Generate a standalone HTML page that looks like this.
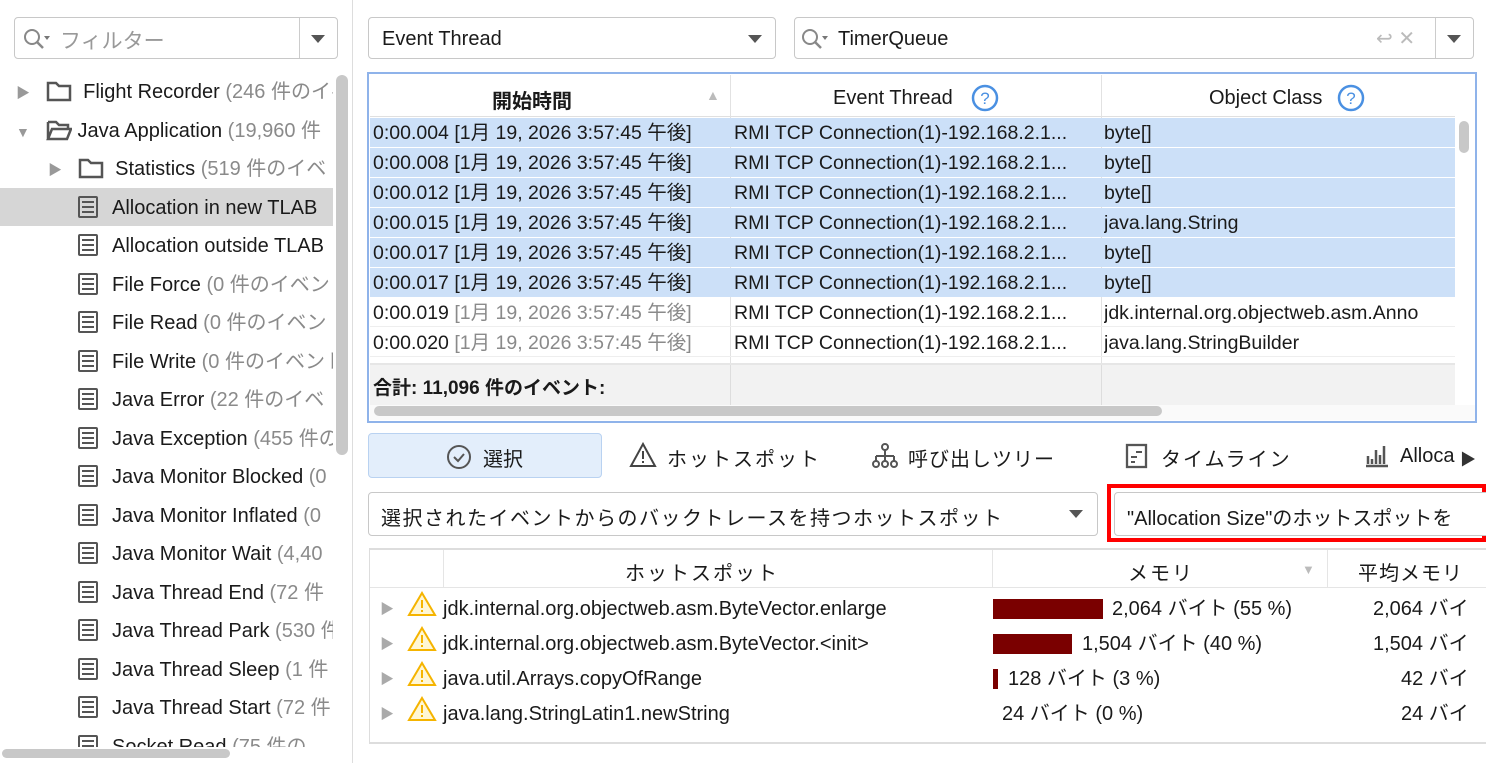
<!DOCTYPE html>
<html><head><meta charset="utf-8"><style>
*{box-sizing:border-box;margin:0;padding:0}
body{width:1486px;height:763px;overflow:hidden;background:#fff;font-family:"Segoe UI","Liberation Sans","Noto Sans CJK JP",sans-serif;font-size:20px;color:#1a1a1a;position:relative}
.a{position:absolute;white-space:nowrap;overflow:hidden}
.box{position:absolute;border:1.5px solid #c8c8c8;border-radius:4px;background:#fff}
.g{color:#8a8a8a}
.tri{position:absolute;width:0;height:0;border-left:7px solid transparent;border-right:7px solid transparent;border-top:8px solid #555}
.row{position:absolute;left:0;height:38px;line-height:40px;white-space:nowrap;overflow:hidden}
.doc{display:inline-block;width:20px;height:22px;border:2.5px solid #555;border-radius:2px;vertical-align:-4px;margin-right:14px;position:relative}
.doc:before{content:"";position:absolute;left:2px;right:2px;top:3px;height:2px;background:#555;box-shadow:0 5px 0 #555,0 10px 0 #555}
.trow{position:absolute;left:370px;width:1085px;height:29px;line-height:31px;white-space:nowrap;overflow:hidden;font-size:19.5px}
.trow span{position:absolute;top:0;overflow:hidden}
.sel{background:#cce0f8}
.hs{position:absolute;left:370px;width:1110px;height:35px;line-height:37px;white-space:nowrap}
.hs span{position:absolute;top:0}
.ar{color:#999;font-size:14px;display:inline-block;width:30px}
</style></head><body>
<!-- left panel -->
<div class="a" style="left:352px;top:0;width:1px;height:763px;background:#ddd"></div>
<div class="box" style="left:14px;top:17px;width:324px;height:42px"></div>
<div class="a" style="left:299px;top:18px;width:1px;height:40px;background:#ccc"></div>
<div class="tri" style="left:311px;top:35px"></div>
<svg class="a" style="left:22px;top:26px" width="34" height="26"><circle cx="10" cy="11" r="7" fill="none" stroke="#888" stroke-width="2"/><line x1="15" y1="16" x2="21" y2="22" stroke="#888" stroke-width="2.5"/><path d="M22 10l6 0-3 4z" fill="#777"/></svg>
<div class="a g" style="left:60px;top:25px;font-size:21px;color:#999">フィルター</div>

<div class="a" style="left:0;top:188px;width:333px;height:38px;background:#d6d6d6"></div>
<div class="row" style="top:72px;left:16px;width:317px"><span class="ar">▶</span><svg width="26" height="22" style="vertical-align:-4px"><path d="M2 3h8l3 3h11v14H2z" fill="none" stroke="#555" stroke-width="2.5"/></svg>&nbsp;&nbsp;Flight Recorder <span class="g">(246 件のイベント)</span></div>
<div class="row" style="top:111px;left:16px;width:317px"><span class="ar">▼</span><svg width="26" height="22" style="vertical-align:-4px"><path d="M2 3h8l3 3h9v4M2 20V3M2 20l4-10h19l-4 10z" fill="none" stroke="#555" stroke-width="2.5"/></svg>&nbsp;Java Application <span class="g">(19,960 件</span></div>
<div class="row" style="top:149px;left:48px;width:285px"><span class="ar">▶</span><svg width="26" height="22" style="vertical-align:-4px"><path d="M2 3h8l3 3h11v14H2z" fill="none" stroke="#555" stroke-width="2.5"/></svg>&nbsp;&nbsp;Statistics <span class="g">(519 件のイベ</span></div>
<div class="row" style="top:188px;left:78px;width:255px"><span class="doc"></span>Allocation in new TLAB</div>
<div class="row" style="top:226px;left:78px;width:255px"><span class="doc"></span>Allocation outside TLAB</div>
<div class="row" style="top:265px;left:78px;width:255px"><span class="doc"></span>File Force <span class="g">(0 件のイベント)</span></div>
<div class="row" style="top:303px;left:78px;width:255px"><span class="doc"></span>File Read <span class="g">(0 件のイベント)</span></div>
<div class="row" style="top:342px;left:78px;width:255px"><span class="doc"></span>File Write <span class="g">(0 件のイベント)</span></div>
<div class="row" style="top:380px;left:78px;width:255px"><span class="doc"></span>Java Error <span class="g">(22 件のイベ</span></div>
<div class="row" style="top:419px;left:78px;width:255px"><span class="doc"></span>Java Exception <span class="g">(455 件の</span></div>
<div class="row" style="top:457px;left:78px;width:255px"><span class="doc"></span>Java Monitor Blocked <span class="g">(0</span></div>
<div class="row" style="top:496px;left:78px;width:255px"><span class="doc"></span>Java Monitor Inflated <span class="g">(0</span></div>
<div class="row" style="top:534px;left:78px;width:255px"><span class="doc"></span>Java Monitor Wait <span class="g">(4,40</span></div>
<div class="row" style="top:573px;left:78px;width:255px"><span class="doc"></span>Java Thread End <span class="g">(72 件</span></div>
<div class="row" style="top:611px;left:78px;width:255px"><span class="doc"></span>Java Thread Park <span class="g">(530 件</span></div>
<div class="row" style="top:650px;left:78px;width:255px"><span class="doc"></span>Java Thread Sleep <span class="g">(1 件</span></div>
<div class="row" style="top:688px;left:78px;width:255px"><span class="doc"></span>Java Thread Start <span class="g">(72 件</span></div>
<div class="row" style="top:727px;left:78px;width:255px;height:20px"><span class="doc"></span>Socket Read <span class="g">(75 件の</span></div>
<div class="a" style="left:336px;top:75px;width:12px;height:380px;background:#c8c8c8;border-radius:6px"></div>
<div class="a" style="left:0;top:747px;width:352px;height:16px;background:#fff"></div>
<div class="a" style="left:2px;top:749px;width:228px;height:9px;background:#c8c8c8;border-radius:5px"></div>

<!-- top combos -->
<div class="box" style="left:368px;top:17px;width:408px;height:42px"></div>
<div class="a" style="left:382px;top:28px">Event Thread</div>
<div class="tri" style="left:748px;top:35px"></div>
<div class="box" style="left:794px;top:17px;width:680px;height:42px"></div>
<div class="a" style="left:1435px;top:18px;width:1px;height:40px;background:#ccc"></div>
<div class="tri" style="left:1447px;top:35px"></div>
<svg class="a" style="left:800px;top:26px" width="34" height="26"><circle cx="10" cy="11" r="7" fill="none" stroke="#888" stroke-width="2"/><line x1="15" y1="16" x2="21" y2="22" stroke="#888" stroke-width="2.5"/><path d="M22 10l6 0-3 4z" fill="#777"/></svg>
<div class="a" style="left:838px;top:28px">TimerQueue</div>
<div class="a" style="left:1376px;top:26px;color:#bbb;font-size:20px">↩ ✕</div>

<!-- top table -->
<div class="a" style="left:367px;top:72px;width:1110px;height:351px;border:2.5px solid #8fb3ea;background:#fff"></div>
<div class="a" style="left:370px;top:75px;width:1085px;height:42px;border-bottom:1px solid #e0e0e0"></div>
<div class="a" style="left:730px;top:75px;width:1px;height:330px;background:#e2e2e2"></div>
<div class="a" style="left:1101px;top:75px;width:1px;height:330px;background:#e2e2e2"></div>
<div class="a" style="left:492px;top:85px;font-weight:bold">開始時間</div>
<div class="a" style="left:706px;top:87px;color:#bbb;font-size:14px">▲</div>
<div class="a" style="left:833px;top:87px">Event Thread</div>
<svg class="a" style="left:971px;top:84px" width="28" height="28"><circle cx="14" cy="14" r="12" fill="none" stroke="#4a90e2" stroke-width="2.5"/><text x="14" y="20" text-anchor="middle" font-size="17" fill="#4a90e2" font-family="Liberation Sans">?</text></svg>
<div class="a" style="left:1209px;top:87px">Object Class</div>
<svg class="a" style="left:1337px;top:84px" width="28" height="28"><circle cx="14" cy="14" r="12" fill="none" stroke="#4a90e2" stroke-width="2.5"/><text x="14" y="20" text-anchor="middle" font-size="17" fill="#4a90e2" font-family="Liberation Sans">?</text></svg>

<div class="trow sel" style="top:118px"><span style="left:3px;width:355px">0:00.004 [1月 19, 2026 3:57:45 午後]</span><span style="left:364px;width:365px">RMI TCP Connection(1)-192.168.2.1...</span><span style="left:734px;width:351px">byte[]</span></div>
<div class="trow sel" style="top:148px"><span style="left:3px;width:355px">0:00.008 [1月 19, 2026 3:57:45 午後]</span><span style="left:364px;width:365px">RMI TCP Connection(1)-192.168.2.1...</span><span style="left:734px">byte[]</span></div>
<div class="trow sel" style="top:178px"><span style="left:3px;width:355px">0:00.012 [1月 19, 2026 3:57:45 午後]</span><span style="left:364px;width:365px">RMI TCP Connection(1)-192.168.2.1...</span><span style="left:734px">byte[]</span></div>
<div class="trow sel" style="top:208px"><span style="left:3px;width:355px">0:00.015 [1月 19, 2026 3:57:45 午後]</span><span style="left:364px;width:365px">RMI TCP Connection(1)-192.168.2.1...</span><span style="left:734px">java.lang.String</span></div>
<div class="trow sel" style="top:238px"><span style="left:3px;width:355px">0:00.017 [1月 19, 2026 3:57:45 午後]</span><span style="left:364px;width:365px">RMI TCP Connection(1)-192.168.2.1...</span><span style="left:734px">byte[]</span></div>
<div class="trow sel" style="top:268px"><span style="left:3px;width:355px">0:00.017 [1月 19, 2026 3:57:45 午後]</span><span style="left:364px;width:365px">RMI TCP Connection(1)-192.168.2.1...</span><span style="left:734px">byte[]</span></div>
<div class="trow" style="top:298px;border-bottom:1px solid #eee"><span style="left:3px;width:355px">0:00.019 <span class="g" style="position:static">[1月 19, 2026 3:57:45 午後]</span></span><span style="left:364px;width:365px">RMI TCP Connection(1)-192.168.2.1...</span><span style="left:734px;width:351px">jdk.internal.org.objectweb.asm.Anno</span></div>
<div class="trow" style="top:328px;border-bottom:1px solid #eee"><span style="left:3px;width:355px">0:00.020 <span class="g" style="position:static">[1月 19, 2026 3:57:45 午後]</span></span><span style="left:364px;width:365px">RMI TCP Connection(1)-192.168.2.1...</span><span style="left:734px">java.lang.StringBuilder</span></div>
<div class="a" style="left:370px;top:363px;width:1085px;height:42px;background:#f2f2f2;border-top:2px solid #e6e6e6"></div>
<div class="a" style="left:730px;top:365px;width:1px;height:40px;background:#ddd"></div>
<div class="a" style="left:1101px;top:365px;width:1px;height:40px;background:#ddd"></div>
<div class="a" style="left:373px;top:373px;font-weight:bold;font-size:19px">合計: 11,096 件のイベント:</div>
<div class="a" style="left:370px;top:405px;width:1105px;height:15px;background:#fafafa"></div>
<div class="a" style="left:374px;top:406px;width:788px;height:10px;background:#c8c8c8;border-radius:5px"></div>
<div class="a" style="left:1459px;top:121px;width:10px;height:32px;background:#c8c8c8;border-radius:5px"></div>

<!-- tabs -->
<div class="a" style="left:368px;top:433px;width:234px;height:45px;background:#e3eefb;border:1.5px solid #b9d2f1;border-radius:4px"></div>
<svg class="a" style="left:446px;top:444px" width="26" height="26"><circle cx="13" cy="13" r="11" fill="none" stroke="#555" stroke-width="2"/><path d="M8 13l4 4 6-7" fill="none" stroke="#555" stroke-width="2"/></svg>
<div class="a" style="left:483px;top:443px">選択</div>
<svg class="a" style="left:629px;top:442px" width="28" height="26"><path d="M14 2L26 24H2z" fill="none" stroke="#444" stroke-width="2"/><path d="M14 9v8M14 19v2" stroke="#444" stroke-width="2"/></svg>
<div class="a" style="left:667px;top:443px;letter-spacing:2px">ホットスポット</div>
<svg class="a" style="left:871px;top:442px" width="28" height="28"><circle cx="14" cy="5" r="3" fill="none" stroke="#555" stroke-width="2"/><path d="M14 8v6M5 14h18M5 14v5M14 14v5M23 14v5" stroke="#555" stroke-width="2" fill="none"/><circle cx="5" cy="22" r="3" fill="none" stroke="#555" stroke-width="2"/><circle cx="14" cy="22" r="3" fill="none" stroke="#555" stroke-width="2"/><circle cx="23" cy="22" r="3" fill="none" stroke="#555" stroke-width="2"/></svg>
<div class="a" style="left:908px;top:443px;letter-spacing:1px">呼び出しツリー</div>
<svg class="a" style="left:1125px;top:443px" width="24" height="26"><rect x="2" y="2" width="19" height="22" fill="none" stroke="#555" stroke-width="2.3"/><path d="M6 14h6M6 19h4M11 9h6" stroke="#555" stroke-width="2"/></svg>
<div class="a" style="left:1161px;top:443px;letter-spacing:2px">タイムライン</div>
<svg class="a" style="left:1364px;top:444px" width="26" height="24"><path d="M2 22h22M4 20v-8M8 20v-5M12 20V6M16 20v-9M20 20V2" stroke="#555" stroke-width="2.5"/></svg>
<div class="a" style="left:1400px;top:445px;width:55px">Alloca</div>
<div class="a" style="left:1460px;top:446px;font-size:16px;color:#333">▶</div>

<!-- dropdowns -->
<div class="box" style="left:368px;top:492px;width:730px;height:44px"></div>
<div class="a" style="left:381px;top:502px;width:670px;letter-spacing:1.5px">選択されたイベントからのバックトレースを持つホットスポット</div>
<div class="tri" style="left:1069px;top:510px"></div>
<div class="a" style="left:1107px;top:484px;width:379px;height:58px;border:4px solid #f00"></div>
<div class="box" style="left:1114px;top:492px;width:380px;height:44px"></div>
<div class="a" style="left:1127px;top:502px;width:359px">"Allocation Size"のホットスポットを</div>

<!-- bottom table -->
<div class="a" style="left:369px;top:548px;width:1117px;height:196px;border-top:2px solid #ddd;border-left:1.5px solid #ddd;border-bottom:2px solid #ddd"></div>
<div class="a" style="left:370px;top:550px;width:1116px;height:38px;border-bottom:1px solid #e5e5e5"></div>
<div class="a" style="left:443px;top:550px;width:1px;height:38px;background:#e5e5e5"></div>
<div class="a" style="left:992px;top:550px;width:1px;height:38px;background:#e5e5e5"></div>
<div class="a" style="left:1327px;top:550px;width:1px;height:38px;background:#e5e5e5"></div>
<div class="a" style="left:625px;top:557px;letter-spacing:2px">ホットスポット</div>
<div class="a" style="left:1128px;top:557px;letter-spacing:2px">メモリ</div>
<div class="a" style="left:1302px;top:562px;color:#bbb;font-size:13px">▼</div>
<div class="a" style="left:1358px;top:557px;letter-spacing:1px">平均メモリ</div>

<div class="hs" style="top:591px"><span style="left:10px;color:#aaa;font-size:14px">▶</span><span style="left:37px;top:-1px"><svg width="30" height="28"><path d="M15 3L28 25H2z" fill="#fff7d6" stroke="#f5b400" stroke-width="2"/><path d="M15 10v8M15 20v2" stroke="#f5b400" stroke-width="2"/></svg></span><span style="left:73px">jdk.internal.org.objectweb.asm.ByteVector.enlarge</span><span style="left:623px;top:8px;width:110px;height:20px;background:#7a0000"></span><span style="left:742px">2,064 バイト (55 %)</span><span style="left:1003px">2,064 バイ</span></div>
<div class="hs" style="top:626px"><span style="left:10px;color:#aaa;font-size:14px">▶</span><span style="left:37px;top:-1px"><svg width="30" height="28"><path d="M15 3L28 25H2z" fill="#fff7d6" stroke="#f5b400" stroke-width="2"/><path d="M15 10v8M15 20v2" stroke="#f5b400" stroke-width="2"/></svg></span><span style="left:73px">jdk.internal.org.objectweb.asm.ByteVector.&lt;init&gt;</span><span style="left:623px;top:8px;width:79px;height:20px;background:#7a0000"></span><span style="left:712px">1,504 バイト (40 %)</span><span style="left:1003px">1,504 バイ</span></div>
<div class="hs" style="top:661px"><span style="left:10px;color:#aaa;font-size:14px">▶</span><span style="left:37px;top:-1px"><svg width="30" height="28"><path d="M15 3L28 25H2z" fill="#fff7d6" stroke="#f5b400" stroke-width="2"/><path d="M15 10v8M15 20v2" stroke="#f5b400" stroke-width="2"/></svg></span><span style="left:73px">java.util.Arrays.copyOfRange</span><span style="left:623px;top:8px;width:5px;height:20px;background:#7a0000"></span><span style="left:638px">128 バイト (3 %)</span><span style="left:1031px">42 バイ</span></div>
<div class="hs" style="top:696px"><span style="left:10px;color:#aaa;font-size:14px">▶</span><span style="left:37px;top:-1px"><svg width="30" height="28"><path d="M15 3L28 25H2z" fill="#fff7d6" stroke="#f5b400" stroke-width="2"/><path d="M15 10v8M15 20v2" stroke="#f5b400" stroke-width="2"/></svg></span><span style="left:73px">java.lang.StringLatin1.newString</span><span style="left:632px">24 バイト (0 %)</span><span style="left:1031px">24 バイ</span></div>
</body></html>
